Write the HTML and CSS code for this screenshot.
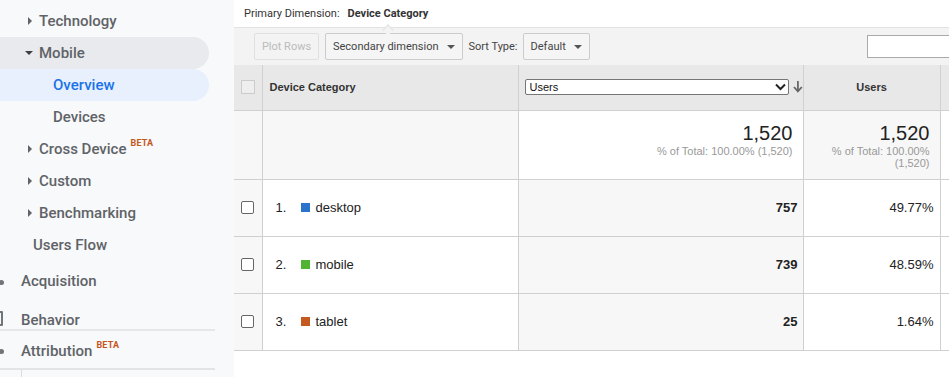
FILE: index.html
```html
<!DOCTYPE html>
<html lang="en">
<head>
    <meta charset="UTF-8">
    <title>Audience - Mobile Overview</title>
    <link rel="stylesheet" href="styles.css">
</head>
<body>
    <div class="app">
        <!-- Left navigation -->
        <nav class="sidebar">
            <div class="nav-item level-2"><span class="caret right"></span>Technology</div>
            <div class="nav-item level-2 open"><span class="caret down"></span>Mobile</div>
            <div class="nav-item level-3 active">Overview</div>
            <div class="nav-item level-3">Devices</div>
            <div class="nav-item level-2"><span class="caret right"></span>Cross Device<sup class="beta">BETA</sup></div>
            <div class="nav-item level-2"><span class="caret right"></span>Custom</div>
            <div class="nav-item level-2"><span class="caret right"></span>Benchmarking</div>
            <div class="nav-item flow">Users Flow</div>
            <div class="nav-section acquisition"><span class="dot"></span>Acquisition</div>
            <div class="nav-section behavior"><span class="bracket"></span>Behavior</div>
            <div class="nav-section attribution"><span class="dot"></span>Attribution<sup class="beta">BETA</sup></div>
            <div class="nav-foot"><span class="foot-line"></span></div>
        </nav>

        <!-- Report -->
        <main class="report">
            <div class="primary-dim">
                <span class="label">Primary Dimension:</span>
                <span class="current">Device Category<span class="notch"></span></span>
            </div>

            <div class="toolbar">
                <button class="btn disabled">Plot Rows</button>
                <button class="btn">Secondary dimension <span class="tri"></span></button>
                <span class="sort-label">Sort Type:</span>
                <button class="btn">Default <span class="tri"></span></button>
                <input class="search" type="text">
            </div>

            <table class="data-table">
                <colgroup>
                    <col class="c-check">
                    <col class="c-dim">
                    <col class="c-users">
                    <col class="c-pct">
                    <col>
                </colgroup>
                <thead>
                    <tr>
                        <th class="check-cell"><span class="head-box"></span></th>
                        <th class="dim-head">Device Category</th>
                        <th class="metric-head">
                            <div class="metric-select">
                                <span class="fake-select">Users
                                    <svg width="11" height="8" viewBox="0 0 11 8"><path d="M1 1.5 L5.5 6 L10 1.5" fill="none" stroke="#222" stroke-width="2"/></svg>
                                </span>
                                <svg class="sort-arrow" width="10" height="12" viewBox="0 0 10 12"><path d="M5 0 V10 M1 6 L5 10.5 L9 6" fill="none" stroke="#666" stroke-width="1.8"/></svg>
                            </div>
                        </th>
                        <th class="users-head">Users</th>
                        <th class="extra"></th>
                    </tr>
                </thead>
                <tbody>
                    <tr class="totals">
                        <td class="check-cell shade"></td>
                        <td class="shade"></td>
                        <td class="num-total">
                            <div class="big">1,520</div>
                            <div class="sub">% of Total: 100.00% (1,520)</div>
                        </td>
                        <td class="num-total shade pct-total">
                            <div class="big">1,520</div>
                            <div class="sub">% of Total: 100.00% (1,520)</div>
                        </td>
                        <td class="extra"></td>
                    </tr>
                    <tr class="row">
                        <td class="check-cell shade"><span class="box"></span></td>
                        <td class="dim-cell"><span class="idx">1.</span><span class="swatch" style="background:#2a73cc"></span>desktop</td>
                        <td class="val shade">757</td>
                        <td class="pct">49.77%</td>
                        <td class="extra"></td>
                    </tr>
                    <tr class="row">
                        <td class="check-cell shade"><span class="box"></span></td>
                        <td class="dim-cell"><span class="idx">2.</span><span class="swatch" style="background:#50b432"></span>mobile</td>
                        <td class="val shade">739</td>
                        <td class="pct">48.59%</td>
                        <td class="extra"></td>
                    </tr>
                    <tr class="row">
                        <td class="check-cell shade"><span class="box"></span></td>
                        <td class="dim-cell"><span class="idx">3.</span><span class="swatch" style="background:#c55a20"></span>tablet</td>
                        <td class="val shade">25</td>
                        <td class="pct">1.64%</td>
                        <td class="extra"></td>
                    </tr>
                </tbody>
            </table>
        </main>
    </div>
</body>
</html>
```

FILE: styles.css
```css
/* Page */
body {
    margin: 0;
    font-family: "Liberation Sans", Arial, sans-serif;
    color: #222;
    background: #fff;
    overflow: hidden;
}

.app {
    display: flex;
    height: 377px;
}

/* Sidebar */
.sidebar {
    width: 234px;
    flex-shrink: 0;
    background: #f8f9fa;
    padding-top: 5px;
    font-family: Roboto, "Noto Sans", sans-serif;
    font-size: 15px;
    font-weight: 500;
    color: #5f6368;
    overflow: hidden;
}

.nav-item {
    height: 32px;
    display: flex;
    align-items: center;
    width: 209px;
    box-sizing: border-box;
    border-radius: 0 16px 16px 0;
}

.nav-item.level-2 {
    padding-left: 27px;
}

.nav-item.level-3 {
    padding-left: 53px;
}

.nav-item.flow {
    padding-left: 33px;
}

.nav-item.open {
    background: #e8eaed;
}

.nav-item.active {
    background: #e8f0fe;
    color: #1a73e8;
}

.caret {
    width: 0;
    height: 0;
    margin-right: 8px;
}

.caret.right {
    border-top: 4px solid transparent;
    border-bottom: 4px solid transparent;
    border-left: 4px solid #5f6368;
    margin-left: 1px;
    margin-right: 7px;
}

.caret.down {
    border-left: 4px solid transparent;
    border-right: 4px solid transparent;
    border-top: 4px solid #3c4043;
    margin-left: -2px;
    margin-right: 6px;
}

.beta {
    font-size: 9px;
    font-weight: 700;
    color: #c5561a;
    margin-left: 4px;
    align-self: flex-start;
    margin-top: 5px;
    letter-spacing: 0.2px;
}

.nav-section {
    display: flex;
    align-items: center;
    padding-left: 21px;
    position: relative;
    width: 215px;
    box-sizing: border-box;
}

.nav-section.acquisition {
    height: 40px;
}

.nav-section.behavior {
    height: 24px;
    margin-top: 6px;
    align-items: flex-end;
    border-bottom: 2px solid #e6e7e9;
}

.nav-section.attribution {
    height: 39px;
    padding-top: 3px;
    border-bottom: 2px solid #e3e4e6;
}

.nav-section .beta {
    margin-top: 6px;
}

.dot {
    position: absolute;
    left: 0;
    top: 50%;
    width: 5px;
    height: 5px;
    margin-top: -1px;
    margin-left: -1px;
    border-radius: 50%;
    background: #70757a;
}

.bracket {
    position: absolute;
    left: -7px;
    bottom: 3px;
    width: 6px;
    height: 11px;
    border: 2px solid #70757a;
    border-radius: 1px;
}

.nav-foot {
    height: 20px;
    position: relative;
}

.foot-line {
    position: absolute;
    left: 21px;
    top: 0;
    height: 20px;
    border-left: 1px solid #dadce0;
}

/* Report */
.report {
    flex: 1;
    min-width: 0;
    overflow: hidden;
}

.primary-dim {
    height: 27px;
    display: flex;
    align-items: center;
    padding-left: 10px;
    font-size: 11px;
    font-family: Roboto, "Liberation Sans", sans-serif;
    border-bottom: 1px solid #e2e2e2;
}

.primary-dim .label {
    color: #333;
    margin-right: 8px;
}

.primary-dim .current {
    font-weight: 700;
    color: #333;
    position: relative;
}

.notch {
    position: absolute;
    left: 36px;
    top: 19px;
    width: 7px;
    height: 7px;
    background: #f3f3f3;
    border-left: 1px solid #e2e2e2;
    border-top: 1px solid #e2e2e2;
    transform: rotate(45deg);
}

.toolbar {
    height: 37px;
    background: #f3f3f3;
    display: flex;
    align-items: center;
    padding-left: 20px;
    font-size: 11px;
    font-family: Roboto, "Liberation Sans", sans-serif;
    white-space: nowrap;
}

.btn {
    height: 27px;
    padding: 0 7px;
    border: 1px solid #ccc;
    border-radius: 2px;
    background: #f5f5f5;
    color: #444;
    font-family: inherit;
    font-size: 11px;
    display: flex;
    align-items: center;
    margin-right: 6px;
}

.btn.disabled {
    color: #bbb;
    border-color: #e0e0e0;
    background: #f3f3f3;
    width: 65px;
    justify-content: center;
}

.tri {
    width: 0;
    height: 0;
    border-left: 4px solid transparent;
    border-right: 4px solid transparent;
    border-top: 4px solid #555;
    margin-left: 8px;
}

.sort-label {
    color: #444;
    margin-right: 5px;
}

.search {
    margin-left: auto;
    margin-right: -10px;
    width: 90px;
    height: 21px;
    border: 1px solid #aaa;
    padding: 0;
    flex-shrink: 0;
}

/* Table */
.data-table {
    border-collapse: collapse;
    table-layout: fixed;
    width: 720px;
    font-size: 13px;
}

.c-check { width: 28px; }
.c-dim { width: 256px; }
.c-users { width: 285px; }
.c-pct { width: 137px; }

.data-table th,
.data-table td {
    border: 1px solid #d0d0d0;
    padding: 0;
}

.data-table thead tr {
    height: 45px;
    background: #e8e8e8;
}

.data-table thead th {
    border-top: none;
    border-bottom: none;
}

.data-table th.check-cell {
    border-left: none;
}

.data-table td.check-cell {
    border-left: none;
}

.head-box {
    display: block;
    width: 12px;
    height: 12px;
    margin: 0 auto;
    border: 1px solid #ccc;
    background: #eee;
}

.dim-head {
    text-align: left;
    padding-left: 7px !important;
    font-size: 11px;
    color: #333;
}

.metric-select {
    display: flex;
    align-items: center;
    padding-left: 6px;
}

.fake-select {
    width: 261px;
    height: 14px;
    border: 1px solid #767676;
    border-radius: 2px;
    background: #fff;
    display: flex;
    align-items: center;
    justify-content: space-between;
    padding: 0 2px 0 4px;
    font-weight: 400;
    font-size: 11px;
    color: #111;
}

.sort-arrow {
    margin-left: 4px;
}

.users-head {
    font-size: 11px;
    color: #333;
}

.totals {
    height: 69px;
}

.shade {
    background: #f7f7f7;
}

.num-total {
    text-align: right;
    padding-right: 10px !important;
    vertical-align: top;
}

.num-total .big {
    font-size: 20px;
    color: #222;
    margin-top: 11px;
    line-height: 23px;
}

.num-total .sub {
    font-size: 11px;
    color: #999;
    line-height: 12px;
}

.pct-total {
    padding-left: 26px !important;
}

.row {
    height: 57px;
}

.row .box {
    display: block;
    width: 11px;
    height: 11px;
    margin: 0 auto;
    border: 1px solid #666;
    border-radius: 2px;
    background: #fff;
}

.dim-cell {
    padding-left: 13px !important;
    color: #222;
}

.idx {
    display: inline-block;
    width: 25px;
}

.swatch {
    display: inline-block;
    width: 9px;
    height: 9px;
    margin-right: 6px;
}

.val {
    text-align: right;
    font-weight: 700;
    padding-right: 5px !important;
}

.pct {
    text-align: right;
    padding-right: 6px !important;
}

.data-table .extra {
    border-right: none;
    background: #fff;
}

.data-table thead .extra {
    background: #e8e8e8;
}
```
